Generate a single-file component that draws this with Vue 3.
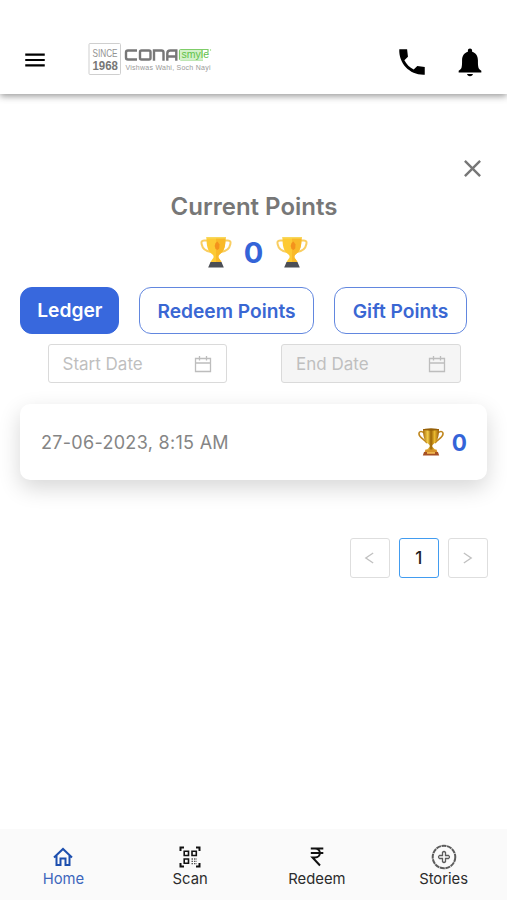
<script setup>
import { ref } from 'vue'

const tabs = [
  { name: 'Ledger', cls: 'ledger' },
  { name: 'Redeem Points', cls: 'redeem' },
  { name: 'Gift Points', cls: 'gift' },
]
const activeTab = ref('Ledger')

const navItems = ['Home', 'Scan', 'Redeem', 'Stories']
const activeNav = ref('Home')

const points = ref(0)
const entries = [{ date: '27-06-2023, 8:15 AM', points: 0 }]
</script>

<template>
  <div class="page">
    <header class="header">
      <button class="icon-button menu" aria-label="Menu">
        <svg viewBox="0 0 24 24"><path d="M3 18h18v-2H3v2zm0-5h18v-2H3v2zm0-7v2h18V6H3z" /></svg>
      </button>
      <svg class="logo" viewBox="0 0 126 36">
        <rect x="1" y="1.5" width="31.5" height="31" rx="1" fill="none" stroke="#cfcfcf" />
        <text x="4.5" y="15" class="since" textLength="25" lengthAdjust="spacingAndGlyphs">SINCE</text>
        <text x="4.5" y="27.5" class="year" textLength="25.5" lengthAdjust="spacingAndGlyphs">1968</text>
        <g class="cona">
          <path d="M49 8.5H40q-2 0-2 2v5q0 2 2 2h9" />
          <rect x="52" y="8.5" width="10.5" height="9" rx="1.5" />
          <path d="M66 18.7V8.5h7.5q2 0 2 2v8.2" />
          <path d="M79.3 18.7v-7.2q0-3 3-3h6v10.2M79.3 14.5h9" />
        </g>
        <path d="M93 7.5h27v3M115 18H93q-1.5 0-1.5-1.5V9q0-1.5 1.5-1.5" fill="none" stroke="#7fcd69" stroke-width="1.2" />
        <path d="M92 8h23v10H92z" fill="#d3f0ca" />
        <text x="93.5" y="16" class="smyle" textLength="27.5" lengthAdjust="spacingAndGlyphs">smyle</text>
        <circle cx="122.5" cy="8" r=".7" fill="#8fd77c" />
        <text x="37.5" y="28" class="tagline" textLength="85" lengthAdjust="spacing">Vishwas Wahi, Soch Nayi</text>
      </svg>
      <div class="header-actions">
        <button class="icon-button" aria-label="Call">
          <svg viewBox="0 0 24 24"><path d="M21 15.46l-5.27-.61-2.52 2.52c-2.83-1.44-5.15-3.75-6.59-6.59l2.53-2.53L8.54 3H3.03C2.450 13.180 10.820 21.550 21 20.970v-5.510z" /></svg>
        </button>
        <button class="icon-button" aria-label="Notifications">
          <svg viewBox="0 0 24 24"><path d="M12 22c1.2 0 2-.6 2.100-1.500H9.900C10 21.400 10.800 22 12 22zM18 16c-.4-1.500-.4-3-.4-5 0-3.300-1.500-5.300-4.100-6.200V4c0-.83-.67-1.500-1.500-1.500s-1.500.67-1.500 1.500v.8C7.900 5.700 6.400 7.700 6.400 11c0 2 0 3.500-.4 5-.2.900-.9 1.400-2 2.100v1.300h16v-1.300c-1.100-.7-1.800-1.200-2-2.100z" /></svg>
        </button>
      </div>
    </header>

    <svg class="defs" aria-hidden="true">
      <defs>
        <linearGradient id="bronze" x1="0" x2="1">
          <stop offset="0" stop-color="#a86a08" />
          <stop offset=".3" stop-color="#f5cf4a" />
          <stop offset=".5" stop-color="#9a6205" />
          <stop offset=".72" stop-color="#eab92f" />
          <stop offset="1" stop-color="#9a5d07" />
        </linearGradient>
      </defs>
      <symbol id="trophy" viewBox="0 0 32 32">
        <path d="M8 4.5H4C1.5 4.5 1.2 6 1.6 8c.8 4.3 4.4 7.3 9.4 8M24 4.5h4c2.5 0 2.8 1.5 2.4 3.5-.8 4.3-4.4 7.3-9.4 8" fill="none" stroke="#f9ce62" stroke-width="2" />
        <path d="M6.5 1h19c0 9-.8 14-6 17.5-1.5 1.2-1.5 3 0 4.5l2 3h-11l2-3c1.5-1.5 1.5-3.3 0-4.5C7.3 15 6.5 10 6.5 1z" fill="#fdca33" />
        <path d="M16 1h9.5c0 9-.8 14-6 17.5-1.5 1.2-1.5 3 0 4.5l2 3H16z" fill="#f9b928" />
        <path d="M6.5 1h19v1.5h-19z" fill="#f8d85c" />
        <path d="M17.5 5.5l2 3-.3 4-1.7 1.5-2-1-.8-3 .8-3z" fill="#f4921c" />
        <path d="M10.5 26h11l2.3 5.5H8.2z" fill="#4b4e55" />
      </symbol>
      <symbol id="trophy-bronze" viewBox="0 0 26 28">
        <path d="M6 5C3 2 .8 4 1 6c.3 4 5 5 8 9M20 5c3-3 5.2-1 5 1-.3 4-5 5-8 9" fill="none" stroke="#bf861d" stroke-width="1.6" />
        <path d="M5 1h16c0 8-1.5 12.5-6 15.5-1 .8-1 2 0 3l2.5 2.500h-9l2.500-2.500c1-1 1-2.200 0-3C6.500 13.500 5 9 5 1z" fill="url(#bronze)" />
        <ellipse cx="13" cy="1.5" rx="8" ry="1.2" fill="#966008" />
        <path d="M7.5 21.5h11l1 3h-13z" fill="#d7932b" />
        <path d="M6 24h14l1.2 3.5H4.8z" fill="#a65024" />
        <path d="M9 24h8v1.8H9z" fill="#efb650" />
      </symbol>
    </svg>

    <main class="content">
      <div class="close-row">
        <button class="icon-button close" aria-label="Close">
          <svg viewBox="0 0 24 24"><path d="M19 6.41L17.59 5 12 10.59 6.41 5 5 6.41 10.59 12 5 17.59 6.41 19 12 13.41 17.59 19 19 17.59 13.41 12z" /></svg>
        </button>
      </div>
      <h1 class="title">Current Points</h1>
      <div class="score">
        <svg><use href="#trophy" /></svg>
        <strong>{{ points }}</strong>
        <svg><use href="#trophy" /></svg>
      </div>

      <div class="tabs">
        <button
          v-for="tab in tabs"
          :key="tab.name"
          :class="['tab', tab.cls, { active: activeTab === tab.name }]"
          @click="activeTab = tab.name"
        >
          {{ tab.name }}
        </button>
      </div>

      <div class="dates">
        <div
          v-for="label in ['Start Date', 'End Date']"
          :key="label"
          :class="['picker', { disabled: label === 'End Date' }]"
        >
          <span>{{ label }}</span>
          <svg viewBox="0 0 18 18">
            <path d="M1.5 3.5h15v13h-15zM1.5 8h15M5.5 1v4.500M12.500 1v4.500" />
          </svg>
        </div>
      </div>

      <div v-for="entry in entries" :key="entry.date" class="card">
        <span class="card-date">{{ entry.date }}</span>
        <span class="card-points">
          <svg><use href="#trophy-bronze" /></svg>
          <strong>{{ entry.points }}</strong>
        </span>
      </div>

      <div class="pagination">
        <button class="page-button" aria-label="Previous">
          <svg viewBox="0 0 12 12"><path d="M10 .5L2 6l8 5.5" /></svg>
        </button>
        <button class="page-button current">1</button>
        <button class="page-button" aria-label="Next">
          <svg viewBox="0 0 12 12"><path d="M2 .5L10 6l-8 5.5" /></svg>
        </button>
      </div>
    </main>

    <nav class="bottom-nav">
      <a
        v-for="item in navItems"
        :key="item"
        :class="['nav-item', { active: activeNav === item }]"
        @click="activeNav = item"
      >
        <svg v-if="item === 'Home'" viewBox="0 0 26 26">
          <path d="M4 13.5l9-8.500 9 8.500M6.500 11.500v9.500h4v-6.500h5v6.500h4v-9.500" fill="none" stroke="#1d4fae" stroke-width="2" />
        </svg>
        <svg v-else-if="item === 'Scan'" viewBox="0 0 26 26" fill="none" stroke="#111" stroke-width="2">
          <path d="M3.500 7V3.500H7M19 3.500h3.500V7M3.500 19v3.500H7M19 22.500h3.500V19" />
          <path d="M7.200 7.200h4.300v4.300H7.200zM15 7.200h4.300v4.300H15zM7.200 15h4.300v4.300H7.200z" stroke-width="1.6" />
          <path d="M14.500 15h5.500M14.500 17.300h5.500M14.500 19.600h5.500" stroke="#555" stroke-width="1.3" stroke-dasharray="1.5 1" />
        </svg>
        <svg v-else-if="item === 'Redeem'" viewBox="0 0 26 26">
          <path d="M6.800 4.500h12.500M6.800 9h12.500M7 4.500h4c6.500 0 6.500 9 0 9H8.500l7.500 8" fill="none" stroke="#111" stroke-width="2" />
        </svg>
        <svg v-else viewBox="0 0 26 26" fill="none" stroke="#5c5c5c">
          <circle cx="13" cy="13" r="11.3" stroke-width="2" stroke-dasharray="5 .6" />
          <path d="M11.500 11.500V8.500q1.500-2 3 0v3h3q2 1.500 0 3h-3v3q-1.500 2-3 0v-3h-3q-2-1.500 0-3z" stroke-width="1.3" />
        </svg>
        <span>{{ item }}</span>
      </a>
    </nav>
  </div>
</template>

<style>
body {
  margin: 0;
  background: #ffffff;
}
</style>

<style scoped>
.page {
  display: flex;
  flex-direction: column;
  width: 100%;
  height: 100vh;
  overflow: hidden;
  background: #ffffff;
  font-family: Inter, 'Liberation Sans', sans-serif;
}

.page * {
  box-sizing: border-box;
}

button {
  margin: 0;
  padding: 0;
  border: 0;
  background: none;
  font-family: inherit;
}

.defs {
  display: block;
  flex: none;
  width: 0;
  height: 0;
}

.header {
  display: flex;
  flex: none;
  align-items: center;
  height: 94px;
  padding: 26px 20px 0 22px;
  box-shadow: 0 2px 7px rgb(0 0 0 / 42%);
}

.icon-button {
  display: block;
  width: 34px;
  height: 34px;
}

.icon-button svg {
  display: block;
  width: 100%;
  height: 100%;
}

.menu {
  width: 26px;
  height: 26px;
  margin-bottom: 1px;
}

.logo {
  width: 126px;
  height: 36px;
  margin-left: 40px;
}

.since {
  fill: #929292;
  font: 11px 'Liberation Sans', sans-serif;
}

.year {
  fill: #777777;
  font: bold 13.5px 'Liberation Sans', sans-serif;
}

.cona {
  fill: none;
  stroke: #777777;
  stroke-width: 2.4;
}

.smyle {
  fill: #5fc148;
  font: 11px 'Liberation Sans', sans-serif;
}

.tagline {
  fill: #999999;
  font: 7px 'Liberation Sans', sans-serif;
}

.header-actions {
  display: flex;
  gap: 24px;
  margin-top: 4px;
  margin-left: auto;
}

.content {
  flex: 1;
  padding: 0 20px;
}

.close-row {
  display: flex;
  justify-content: flex-end;
  padding-top: 60px;
}

.close {
  width: 29px;
  height: 29px;
  fill: #777777;
}

.title {
  margin: 9px 0 0;
  padding-left: 1px;
  color: #777777;
  font-size: 24px;
  font-weight: 600;
  line-height: 30px;
  text-align: center;
}

.score {
  display: flex;
  align-items: center;
  justify-content: center;
  height: 32px;
  margin-top: 14px;
}

.score svg {
  width: 32px;
  height: 32px;
}

.score strong {
  width: 44px;
  color: #3464d8;
  font-size: 29px;
  font-weight: 700;
  text-align: center;
}

.tabs {
  display: flex;
  gap: 19.5px;
  margin: 19px 0 0 0.3px;
}

.tab {
  height: 47px;
  border: 1.5px solid #6287df;
  border-radius: 12px;
  color: #3a67d3;
  font-size: 19.2px;
  font-weight: 600;
}

.tab.active {
  padding-bottom: 2px;
  background: #3868dd;
  border-color: #3868dd;
  color: #ffffff;
}

.ledger {
  width: 99px;
}

.redeem {
  width: 175.5px;
}

.gift {
  width: 133.5px;
}

.dates {
  display: flex;
  gap: 54px;
  margin: 10px 0 0 27.5px;
}

.picker {
  display: flex;
  align-items: center;
  justify-content: space-between;
  width: 179.5px;
  height: 39px;
  padding: 0 14px;
  border: 1.5px solid #dadada;
  border-radius: 3px;
  color: #bfbfbf;
  font-size: 17px;
}

.picker.disabled {
  background: #f5f5f5;
}

.picker svg {
  width: 18px;
  height: 18px;
  fill: none;
  stroke: #bdbdbd;
  stroke-width: 1.3;
}

.card {
  display: flex;
  align-items: center;
  justify-content: space-between;
  height: 76px;
  margin-top: 21px;
  padding: 0 20px 0 21px;
  border-radius: 10px;
  background: #ffffff;
  box-shadow: 0 8px 22px rgb(0 0 0 / 16%);
}

.card-date {
  color: #858585;
  font-size: 18px;
  letter-spacing: 0.3px;
}

.card-points {
  display: flex;
  align-items: center;
  gap: 8px;
}

.card-points svg {
  width: 26px;
  height: 28px;
}

.card-points strong {
  color: #3464d8;
  font-size: 22.5px;
}

.pagination {
  display: flex;
  justify-content: flex-end;
  gap: 9.5px;
  margin: 58px -0.5px 0 0;
}

.page-button {
  display: flex;
  align-items: center;
  justify-content: center;
  width: 39.5px;
  height: 39.5px;
  border: 1.5px solid #dedede;
  border-radius: 3px;
}

.page-button svg {
  width: 11px;
  height: 12px;
  fill: none;
  stroke: #c1c1c1;
  stroke-width: 1.5;
}

.page-button.current {
  border-color: #429cf0;
  color: #222222;
  font-size: 17px;
  font-weight: 500;
}

.bottom-nav {
  display: flex;
  flex: none;
  height: 71px;
  background: #fafafa;
}

.nav-item {
  display: flex;
  flex: 1;
  flex-direction: column;
  align-items: center;
  padding-top: 15px;
  color: #2c2c2c;
  font-size: 14.8px;
  line-height: 18px;
}

.nav-item svg {
  width: 26px;
  height: 26px;
}

.nav-item.active {
  color: #3d67bd;
}
</style>
